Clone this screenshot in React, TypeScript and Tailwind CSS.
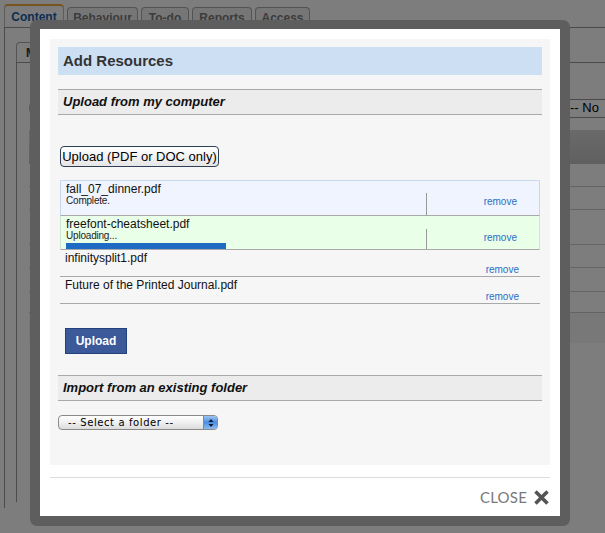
import React from "react";

const files = [
  { name: "fall_07_dinner.pdf", status: "Complete.", kind: "done" },
  { name: "freefont-cheatsheet.pdf", status: "Uploading...", kind: "uploading" },
  { name: "infinitysplit1.pdf", status: "", kind: "idle" },
  { name: "Future of the Printed Journal.pdf", status: "", kind: "idle" },
];

const tabs = [
  { label: "Behaviour", w: "w-[71px]" },
  { label: "To-do", w: "w-[48px]" },
  { label: "Reports", w: "w-[60px]" },
  { label: "Access", w: "w-[55px]" },
];

// page that sits dimmed behind the modal
const BackgroundPage = () => (
  <div className="pt-[5px] pl-[4px] h-full">
    <div className="flex items-end gap-[3px] border-b border-[#9a9a9a] h-[23px]">
      <div className="h-[23px] w-[60px] bg-white border border-b-0 border-[#bbb] border-t-[2px] border-t-[#f2a93b] rounded-t-[4px] flex items-center justify-center text-[12px] font-bold text-[#1b5ea8]">
        Content
      </div>
      {tabs.map((t) => (
        <div
          key={t.label}
          className={`h-[20px] ${t.w} bg-[#f0f0f0] border border-b-0 border-[#aaa] rounded-t-[4px] flex items-center justify-center text-[12px] font-bold text-[#7a7a7a]`}
        >
          {t.label}
        </div>
      ))}
    </div>
    <div className="border-l border-[#9a9a9a] h-[480px] pl-[11px] pt-[14px]">
      <div className="w-[60px] h-[20px] border border-b-0 border-[#aaa] rounded-t-[4px] pl-[9px] text-[12px] font-bold text-[#333] flex items-center">
        Main
      </div>
      <div className="border-l border-t border-[#9a9a9a] h-[440px] pl-[12px] pt-[33px]">
        <div className="flex items-center justify-between h-[24px]">
          <div className="w-[40px] h-[24px] rounded-full border border-[#aaa]" />
          <div className="w-[60px] h-[19px] mr-[-20px] rounded-[4px] border border-[#999] text-[13px] text-black pl-[4px] flex items-center">
            -- No
          </div>
        </div>
        <div className="mt-[10px] h-[34px] bg-gradient-to-b from-[#d8d8d8] to-[#c4c4c4]" />
        <div className="h-[23px] border-b border-[#ccc] pl-[1px] text-[13px] text-[#333] flex items-end">N</div>
        <div className="h-[23px] border-b border-[#ccc] pl-[1px] text-[13px] text-[#333]">T</div>
        <div className="h-[35px] border-b border-[#ccc] pl-[1px] text-[13px] text-[#333] flex items-center">S</div>
        <div className="h-[23px] border-b border-[#ccc] pl-[1px] text-[13px] text-[#333] flex items-center">M</div>
        <div className="h-[24px] border-b border-[#ccc] pl-[1px] text-[13px] text-[#333] flex items-center">F</div>
        <div className="h-[21px] border-b border-[#ccc] pl-[1px] text-[13px] text-[#333] flex items-center">M</div>
        <div className="h-[30px] bg-[#f4f4f4] flex items-center pl-[6px]">
          <div className="w-[10px] h-[10px] border border-[#888]" />
        </div>
      </div>
    </div>
  </div>
);

const SectionHeader = ({ children }: { children: React.ReactNode }) => (
  <div className="h-[26px] border-y border-[#a9a9a9] bg-[#ececec] pl-[5px] flex items-center text-[13px] font-bold italic text-[#111]">
    {children}
  </div>
);

const FileRow = ({ file, index }: { file: (typeof files)[number]; index: number }) => {
  const rowCls =
    file.kind === "done"
      ? "h-[36px] bg-[#eff4fe] border border-[#c6d9ef] border-b-[#a9a9a9]"
      : file.kind === "uploading"
      ? "h-[34px] bg-[#eaffe8] border-x border-[#d4e4d2] border-b border-b-[#a9a9a9]"
      : "h-[27px] border-b border-[#a9a9a9]";
  return (
    <div className={`flex ${rowCls}`}>
      <div className="flex-1 flex flex-col pl-[5px] pt-[1px]">
        <div className="text-[12px] leading-[14px] text-[#111]">{file.name}</div>
        {file.status && (
          <div className="text-[10px] leading-[10px] text-[#222] tracking-[-0.2px]">{file.status}</div>
        )}
        {file.kind === "uploading" && <div className="mt-[2px] w-[160px] h-[10px] bg-[#1f6bc4]" />}
      </div>
      {file.kind === "idle" ? (
        <div className="w-[113px] flex items-end justify-end pr-[21px] pb-[1px] text-[10px] leading-[11px] text-[#2a6fc9]">
          remove
        </div>
      ) : (
        <div
          className={`w-[113px] self-end border-l border-[#999] flex items-center justify-end pr-[22px] text-[10px] text-[#2a6fc9] ${
            index === 0 ? "h-[22px] pb-[5px]" : "h-[20px] pb-[3px]"
          }`}
        >
          remove
        </div>
      )}
    </div>
  );
};

export default function App() {
  return (
    <div className="relative w-[605px] h-[533px] overflow-hidden bg-white font-['Liberation_Sans',Arial,sans-serif]">
      <BackgroundPage />
      <div className="absolute inset-0 bg-black/[0.51]" />

      {/* modal */}
      <div className="absolute left-[30px] top-[20px] w-[540px] h-[506px] rounded-[7px] bg-[#5e5e5e] pt-[9px] px-[10px] pb-[10px]">
        <div className="bg-white h-full pt-[10px] px-[10px] flex flex-col">
          <div className="h-[426px] bg-[#f6f6f6] px-[8px] pt-[8px]">
            <div className="h-[28px] bg-[#cddff3] pl-[5px] flex items-center text-[15px] font-bold text-[#333]">
              Add Resources
            </div>

            <div className="mt-[14px]">
              <SectionHeader>Upload from my computer</SectionHeader>
            </div>

            <div className="mt-[31px] ml-[2px]">
              <button className="w-[159px] h-[21px] rounded-[4px] border border-[#2d4058] bg-gradient-to-b from-white to-[#e6e6e6] text-[13px] text-black flex items-center justify-center">
                Upload (PDF or DOC only)
              </button>
            </div>

            <div className="mt-[13px] ml-[2px] w-[480px]">
              {files.map((f, i) => (
                <FileRow key={f.name} file={f} index={i} />
              ))}
            </div>

            <div className="mt-[24px] ml-[7px]">
              <button className="w-[62px] h-[26px] bg-[#3c5a9a] border border-[#22407a] text-white text-[12px] font-bold">
                Upload
              </button>
            </div>

            <div className="mt-[21px]">
              <SectionHeader>Import from an existing folder</SectionHeader>
            </div>

            <div className="mt-[14px] w-[160px] h-[15px] rounded-[4px] border border-[#8a8a8a] bg-gradient-to-b from-white via-[#f0f0f0] to-[#dcdcdc] flex items-center overflow-hidden">
              <span className="flex-1 pl-[9px] text-[10px] tracking-[0.6px] text-black font-['DejaVu_Sans',sans-serif]">
                -- Select a folder --
              </span>
              <span className="w-[14px] h-full bg-gradient-to-b from-[#9cc4f2] via-[#4a8ee0] to-[#8cbcf2] border-l border-[#6a8cb8] flex items-center justify-center">
                <svg width="6" height="10" viewBox="0 0 6 10">
                  <path d="M3 1 L5.5 4 H0.5 Z" fill="#0a1a33" />
                  <path d="M3 9 L5.5 6 H0.5 Z" fill="#0a1a33" />
                </svg>
              </span>
            </div>
          </div>

          <div className="mt-[12px] border-t border-[#dcdcdc] flex justify-end items-center pt-[8px] gap-[4px]">
            <span className="text-[15px] text-[#7a7a7a] font-['Lato',sans-serif] tracking-[0.2px] mr-[2px]">CLOSE</span>
            <svg width="17" height="17" viewBox="0 0 17 17">
              <path d="M2.5 2.5 L14.5 14.5 M14.5 2.5 L2.5 14.5" stroke="#555" strokeWidth="3.6" strokeLinecap="butt" />
            </svg>
          </div>
        </div>
      </div>
    </div>
  );
}
